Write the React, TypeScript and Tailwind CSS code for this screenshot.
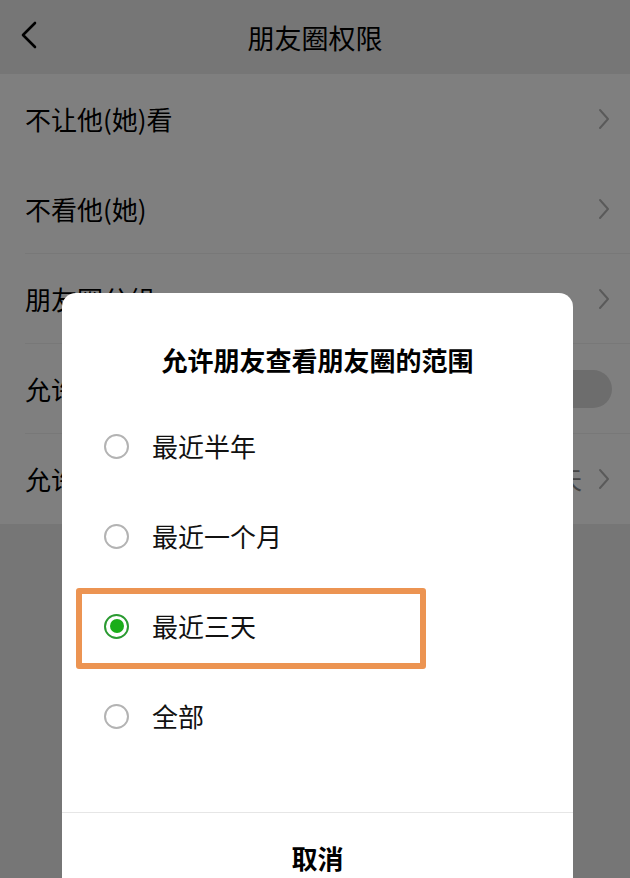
import React from 'react';

// ============================================================================
// Icons
// ============================================================================

const BackIcon = () => (
  <svg width="18" height="28" viewBox="0 0 18 28" fill="none">
    <polyline
      points="15,2 3,14 15,26"
      stroke="#000"
      strokeWidth="2.6"
      strokeLinecap="round"
      strokeLinejoin="round"
    />
  </svg>
);

const ChevronRight = () => (
  <svg width="12" height="22" viewBox="0 0 12 22" fill="none">
    <polyline
      points="2,2 10,11 2,20"
      stroke="#b4b4b4"
      strokeWidth="2"
      strokeLinecap="round"
      strokeLinejoin="round"
    />
  </svg>
);

// ============================================================================
// Background settings page
// ============================================================================

interface SettingRowProps {
  label: string;
  right?: React.ReactNode;
  divider?: boolean;
}

const SettingRow: React.FC<SettingRowProps> = ({ label, right, divider = true }) => (
  <div className="relative flex h-[90px] items-center justify-between pl-[25px] pr-[20px]">
    <span className="text-[26px] leading-none text-black">{label}</span>
    {right}
    {divider && <div className="absolute bottom-0 left-[25px] right-0 h-px bg-[#f1f1f1]" />}
  </div>
);

const SettingsPage = () => (
  <div className="flex flex-col">
    {/* Nav bar */}
    <div className="relative flex h-[74px] items-center justify-center bg-[#ededed]">
      <div className="absolute left-[20px] top-[21px]">
        <BackIcon />
      </div>
      <span className="text-[27px] leading-none text-black">朋友圈权限</span>
    </div>

    {/* List */}
    <div className="flex flex-col bg-white">
      <SettingRow label="不让他(她)看" right={<ChevronRight />} divider={false} />
      <SettingRow label="不看他(她)" right={<ChevronRight />} />
      <SettingRow label="朋友圈分组" right={<ChevronRight />} />
      <SettingRow
        label="允许陌生人查看十条朋友圈"
        right={<div className="mr-[-2px] h-[38px] w-[64px] rounded-full bg-[#dadada]" />}
      />
      <SettingRow
        label="允许朋友查看朋友圈的范围"
        divider={false}
        right={
          <div className="flex items-center gap-[16px]">
            <span className="text-[24px] leading-none text-[#888]">最近三天</span>
            <ChevronRight />
          </div>
        }
      />
    </div>
  </div>
);

// ============================================================================
// Dialog
// ============================================================================

const options = ['最近半年', '最近一个月', '最近三天', '全部'];
const selectedIndex = 2;

const Radio: React.FC<{ checked: boolean }> = ({ checked }) =>
  checked ? (
    <div className="flex h-[25px] w-[25px] items-center justify-center rounded-full border-2 border-[#2a9a31]">
      <div className="h-[14px] w-[14px] rounded-full bg-[#1aad19]" />
    </div>
  ) : (
    <div className="h-[25px] w-[25px] rounded-full border-2 border-[#b3b3b3]" />
  );

const RangeDialog = () => (
  <div className="absolute left-[62px] top-[293px] flex h-[640px] w-[511px] flex-col rounded-[14px] bg-white">
    <div className="mt-[49px] flex h-[36px] items-center justify-center">
      <span className="text-[26px] font-bold leading-none text-black">允许朋友查看朋友圈的范围</span>
    </div>

    <div className="mt-[23px] flex flex-col">
      {options.map((opt, i) => (
        <div key={opt} className="flex h-[90px] items-center gap-[23px] pl-[42px]">
          <Radio checked={i === selectedIndex} />
          <span className="text-[26px] leading-none text-[#111]">{opt}</span>
        </div>
      ))}
    </div>

    {/* highlight annotation around the selected option */}
    <div className="absolute left-[14px] top-[295px] h-[81px] w-[350px] rounded-[3px] border-[6px] border-[#ec9452]" />

    <div className="mt-[51px] h-px bg-[#e6e6e6]" />
    <div className="flex h-[90px] items-center justify-center">
      <span className="text-[26px] font-bold leading-none text-black">取消</span>
    </div>
  </div>
);

// ============================================================================
// App
// ============================================================================

export default function App() {
  return (
    <div className="relative h-[878px] w-[630px] overflow-hidden bg-[#ededed] font-['Noto_Sans_CJK_SC','Liberation_Sans',sans-serif]">
      <SettingsPage />
      <div className="absolute inset-0 bg-black/50" />
      <RangeDialog />
    </div>
  );
}
